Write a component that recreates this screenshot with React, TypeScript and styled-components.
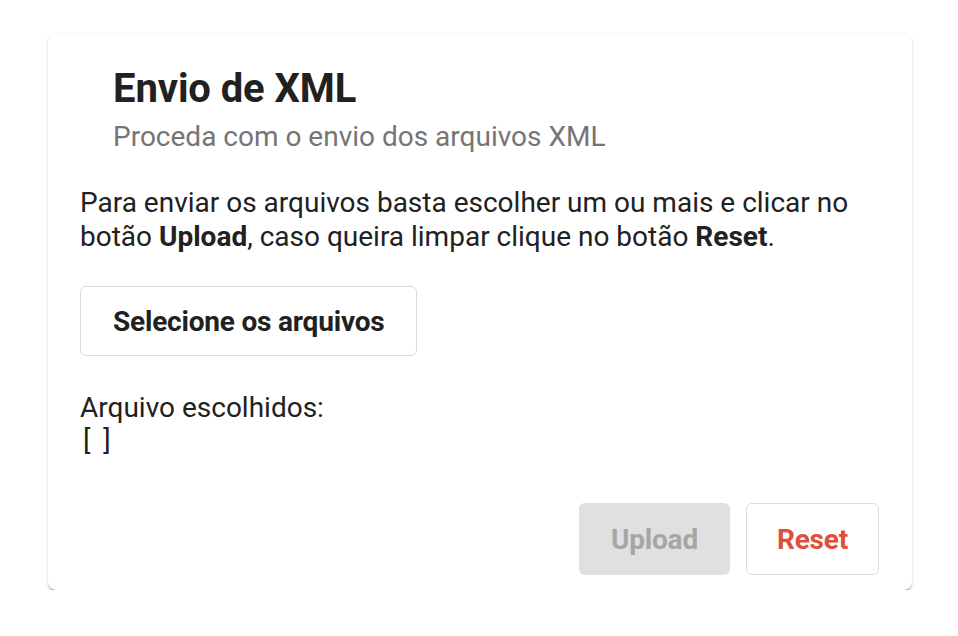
import React from "react";
import styled, { createGlobalStyle } from "styled-components";

const Global = createGlobalStyle`
  html, body { margin: 0; padding: 0; background: #ffffff; }
  body { font-family: Roboto, "Noto Sans", Arial, sans-serif; color: #212121; }
`;

const Page = styled.div`
  padding: 34px 46px 0 48px;
`;

const Card = styled.div`
  box-sizing: border-box;
  width: 864px;
  height: 556px;
  background: #fff;
  border-radius: 8px;
  box-shadow: 0 2px 1px -1px rgba(0,0,0,.38), 0 1px 1px 0 rgba(0,0,0,.14), 0 1px 4px 0 rgba(0,0,0,.12);
  display: flex;
  flex-direction: column;
  padding: 0 33px 15px 32px;
`;

const Header = styled.div`
  padding: 31px 0 0 33px;
`;

const Title = styled.h1`
  margin: 0;
  font-size: 40px;
  font-weight: 700;
  line-height: 48px;
  letter-spacing: -0.1px;
  color: #212121;
`;

const Subtitle = styled.div`
  margin-top: 6px;
  font-size: 28px;
  line-height: 36px;
  color: #757575;
`;

const Body = styled.div`
  margin-top: 31px;
  flex: 1;
`;

const Text = styled.p`
  margin: 0;
  font-size: 28px;
  line-height: 34px;
  color: #212121;
  b { font-weight: 700; }
`;

const Button = styled.button<{ $variant?: "outline" | "disabled" | "danger" }>`
  box-sizing: border-box;
  font-family: Roboto, Arial, sans-serif;
  font-size: 28px;
  font-weight: 700;
  letter-spacing: -0.2px;
  height: ${p => (p.$variant === "outline" ? "70px" : "72px")};
  padding: 0 ${p => (p.$variant === "danger" ? "30px" : "32px")};
  border-radius: 6px;
  cursor: pointer;
  background: ${p => (p.$variant === "disabled" ? "#e0e0e0" : "#ffffff")};
  border: ${p => (p.$variant === "disabled" ? "none" : "1.5px solid #dcdcdc")};
  color: ${p => (p.$variant === "disabled" ? "#a6a6a6" : p.$variant === "danger" ? "#e04f3c" : "#212121")};
`;

const SelectRow = styled.div`
  margin-top: 32px;
`;

const Chosen = styled.div`
  margin-top: 35px;
  font-size: 28px;
  line-height: 33px;
  color: #212121;
`;

const Brackets = styled.div`
  padding-left: 3px;
  font-size: 28px;
  line-height: 33px;
  letter-spacing: 3px;
`;

const Actions = styled.div`
  display: flex;
  justify-content: flex-end;
  gap: 16px;
`;

export default function App() {
  return (
    <>
      <Global />
      <Page>
        <Card>
          <Header>
            <Title>Envio de XML</Title>
            <Subtitle>Proceda com o envio dos arquivos XML</Subtitle>
          </Header>
          <Body>
            <Text>
              Para enviar os arquivos basta escolher um ou mais e clicar no botão <b>Upload</b>, caso
              queira limpar clique no botão <b>Reset</b>.
            </Text>
            <SelectRow>
              <Button $variant="outline">Selecione os arquivos</Button>
            </SelectRow>
            <Chosen>Arquivo escolhidos:</Chosen>
            <Brackets>[ ]</Brackets>
          </Body>
          <Actions>
            <Button $variant="disabled">Upload</Button>
            <Button $variant="danger">Reset</Button>
          </Actions>
        </Card>
      </Page>
    </>
  );
}
